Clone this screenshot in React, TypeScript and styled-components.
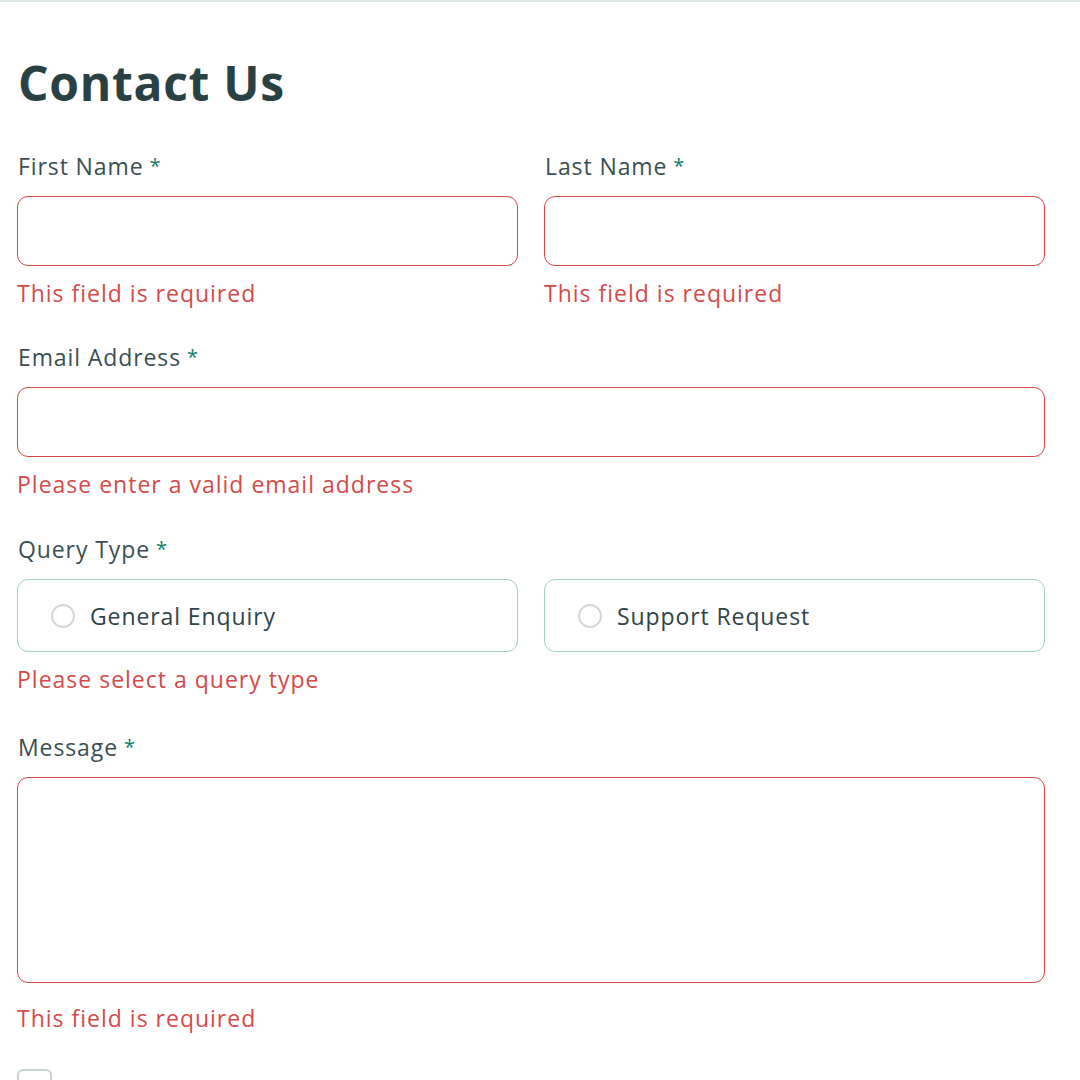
import React from "react";
import styled, { createGlobalStyle } from "styled-components";

const Global = createGlobalStyle`
  html, body { margin: 0; padding: 0; background: #ffffff; }
  body {
    font-family: "Open Sans", "Noto Sans", sans-serif;
    border-top: 2px solid #dde8e6;
    overflow: hidden;
  }
  * { box-sizing: border-box; }
`;

const Card = styled.main`
  padding: 57px 35px 0 17px;
  width: 1080px;
  height: 1078px;
  overflow: hidden;
`;

const Title = styled.h1`
  margin: 0 0 41px 0;
  font-size: 48px;
  line-height: 48px;
  font-weight: 700;
  color: #2a4144;
  letter-spacing: 0.7px;
  padding-left: 1px;
`;

const Form = styled.form`
  display: flex;
  flex-direction: column;
  gap: 28px;
`;

const Row = styled.div`
  display: grid;
  grid-template-columns: 1fr 1fr;
  column-gap: 26px;
`;

const Field = styled.div<{ $extraTop?: number }>`
  display: flex;
  flex-direction: column;
  margin-top: ${(p) => p.$extraTop ?? 0}px;
`;

const Label = styled.label`
  font-size: 23px;
  line-height: 36px;
  color: #3b4f52;
  margin-bottom: 12px;
  padding-left: 1px;
  letter-spacing: 0.9px;
`;

const Star = styled.span`
  color: #0c7d69;
  margin-left: 6px;
  font-size: 20px;
  vertical-align: 2px;
`;

const Input = styled.input<{ $invalid?: boolean }>`
  display: block;
  height: 70px;
  width: 100%;
  border: 1.5px solid ${(p) => (p.$invalid ? "#d94848" : "#87a3a6")};
  border-radius: 11px;
  background: #fff;
  font: inherit;
  outline: none;
`;

const TextArea = styled.textarea<{ $invalid?: boolean }>`
  display: block;
  height: 206px;
  width: 100%;
  border: 1.5px solid ${(p) => (p.$invalid ? "#d94848" : "#87a3a6")};
  border-radius: 11px;
  background: #fff;
  resize: none;
  font: inherit;
  outline: none;
`;

const Error = styled.span<{ $gap?: number }>`
  margin-top: ${(p) => p.$gap ?? 9}px;
  font-size: 23px;
  line-height: 36px;
  color: #d54a4a;
  letter-spacing: 1px;
`;

const RadioBox = styled.label`
  height: 73px;
  border: 1.5px solid #a3d3bd;
  border-radius: 11px;
  display: flex;
  align-items: center;
  padding-left: 33px;
  gap: 15px;
  font-size: 23px;
  letter-spacing: 0.9px;
  color: #2f4447;
`;

const RadioCircle = styled.span`
  width: 24px;
  height: 24px;
  border-radius: 50%;
  border: 2px solid #d4d8d8;
  flex: none;
`;

const ConsentRow = styled.label`
  margin-top: 5px;
  display: flex;
  align-items: flex-start;
  gap: 17px;
  font-size: 23px;
  letter-spacing: 0.9px;
  color: #2a4144;
`;

const CheckBox = styled.span`
  width: 35px;
  height: 35px;
  border: 2px solid #c9d2d3;
  border-radius: 6px;
  flex: none;
`;

const ConsentText = styled.span`
  margin-top: 4px;
`;

export default function App() {
  return (
    <>
      <Global />
      <Card>
        <Title>Contact Us</Title>
        <Form>
          <Row>
            <Field>
              <Label>
                First Name<Star>*</Star>
              </Label>
              <Input $invalid />
              <Error>This field is required</Error>
            </Field>
            <Field>
              <Label>
                Last Name<Star>*</Star>
              </Label>
              <Input $invalid />
              <Error>This field is required</Error>
            </Field>
          </Row>
          <Field>
            <Label>
              Email Address<Star>*</Star>
            </Label>
            <Input $invalid />
            <Error>Please enter a valid email address</Error>
          </Field>
          <Field $extraTop={1}>
            <Label>
              Query Type<Star>*</Star>
            </Label>
            <Row>
              <RadioBox>
                <RadioCircle />
                General Enquiry
              </RadioBox>
              <RadioBox>
                <RadioCircle />
                Support Request
              </RadioBox>
            </Row>
            <Error>Please select a query type</Error>
          </Field>
          <Field $extraTop={4}>
            <Label>
              Message<Star>*</Star>
            </Label>
            <TextArea $invalid />
            <Error $gap={17}>This field is required</Error>
          </Field>
          <ConsentRow>
            <CheckBox />
            <ConsentText>
              I consent to being contacted by the team<Star>*</Star>
            </ConsentText>
          </ConsentRow>
        </Form>
      </Card>
    </>
  );
}
